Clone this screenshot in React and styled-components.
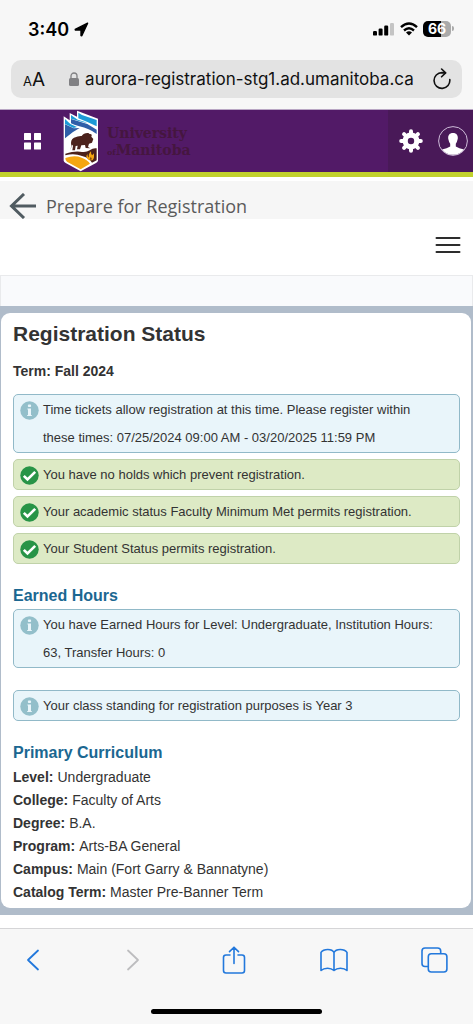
import styled, { createGlobalStyle } from 'styled-components';

const notices = [
  { id: 1, type: 'success', text: 'You have no holds which prevent registration.' },
  { id: 2, type: 'success', text: 'Your academic status Faculty Minimum Met permits registration.' },
  { id: 3, type: 'success', text: 'Your Student Status permits registration.' }
];

const curriculum = [
  { label: 'Level', value: 'Undergraduate' },
  { label: 'College', value: 'Faculty of Arts' },
  { label: 'Degree', value: 'B.A.' },
  { label: 'Program', value: 'Arts-BA General' },
  { label: 'Campus', value: 'Main (Fort Garry & Bannatyne)' },
  { label: 'Catalog Term', value: 'Master Pre-Banner Term' }
];

const gearTeeth = [0, 45, 90, 135, 180, 225, 270, 315];

const LocationIcon = () => (
  <svg width="15" height="15" viewBox="0 0 15 15" aria-hidden="true">
    <path d="M13.6 1.2 L1.2 7.3 L1.4 8 H7 V13.6 L7.8 13.8 Z" fill="#000" stroke="#000" strokeWidth="1.4" strokeLinejoin="round" />
  </svg>
);

const SignalIcon = () => (
  <svg width="22" height="14" viewBox="0 0 22 14" aria-hidden="true">
    <rect x="0" y="9" width="4" height="4.6" rx="1.2" />
    <rect x="5.6" y="6.5" width="4" height="7.1" rx="1.2" />
    <rect x="11.2" y="3.6" width="4" height="10" rx="1.2" />
    <rect x="17" y="1" width="4" height="12.6" rx="1.2" fill="#c4c4c4" />
  </svg>
);

const WifiIcon = () => (
  <svg width="18" height="14" viewBox="0 0 18 14" fill="none" stroke="#000" strokeWidth="2.4" aria-hidden="true">
    <path d="M1 5.2 Q9 -2.2 17 5.2" />
    <path d="M4 8.5 Q9 4.1 14 8.5" />
    <path d="M9 13.6 L6 10.5 Q9 8 12 10.5Z" fill="#000" stroke="none" />
  </svg>
);

const LockIcon = () => (
  <svg width="10" height="14" viewBox="0 0 10 14" aria-hidden="true">
    <rect x="0" y="6" width="10" height="8" rx="1.5" fill="#808083" />
    <path d="M2 6.5 V4 a3 3 0 0 1 6 0 V6.5" fill="none" stroke="#808083" strokeWidth="1.3" />
  </svg>
);

const ReloadIcon = () => (
  <svg width="18" height="22" viewBox="0 0 18 22" fill="none" stroke="#111" strokeWidth="1.6" strokeLinecap="round" strokeLinejoin="round" aria-hidden="true">
    <path d="M16.8 11.6 A7.9 7.9 0 1 1 9 4.6 L12.4 4.9" />
    <path d="M8.6 1 L12.6 4.9 L8.6 8.8" />
  </svg>
);

const GridIcon = () => (
  <svg width="17" height="17" viewBox="0 0 17 17" fill="#fff" aria-hidden="true">
    <rect width="7" height="7" rx=".6" />
    <rect x="10" width="7" height="7" rx=".6" />
    <rect y="9.5" width="7" height="7" rx=".6" />
    <rect x="10" y="9.5" width="7" height="7" rx=".6" />
  </svg>
);

const CrestLogo = () => (
  <svg width="36" height="62" viewBox="190 29 108 186" aria-hidden="true">
    <path d="M192 48 L210 60 L210 38 L232 49 L232 31 L295 55 V181 Q294 185 289 188 L243 213 L198 188 Q193 185 192 181Z" fill="#fff" />
    <path d="M236 37 L247 44 L291 59 V78 Q264 65 236 54Z" fill="#1c9ad6" />
    <path d="M214 56 L236 63 L263 71 L291 88 V101 Q268 84 239 78 Q222 74 214 69Z" fill="#2f5ea8" />
    <path d="M214 44 L234 58 L254 64 L263 69 L238 62 L214 55Z" fill="#1c9ad6" />
    <path d="M196 72 L222 84 L240 83 Q218 94 196 114Z" fill="#2f5ea8" />
    <path d="M196 56 L212 71 L232 80 L222 83 L196 71Z" fill="#1c9ad6" />
    <path d="M212 150 L215 136 Q211 118 223 112 Q237 106 246 107 Q252 97 266 98 L270 101 Q279 100 275 109 L281 116 L277 127 L268 130 L265 140 L272 144 L258 143 L256 134 L245 135 L241 147 L232 147 L234 136 L228 137 L226 150 L218 150 L220 136 L217 133Z" fill="#4b211b" />
    <path d="M197 160 Q226 151 241 154 Q259 158 270 150 Q281 142 291 144 V180 L277 187 Q267 171 247 167 Q223 157 197 165Z" fill="#4b211b" />
    <path d="M197 173 Q225 163 246 172 Q265 179 271 190 L243 207 L202 184 Q197 181 197 173Z" fill="#f5a611" />
    <path d="M268 180 Q255 171 263 161 Q263 169 268 172 Q265 161 274 153 Q273 161 278 165 L282 159 Q286 173 278 180Z" fill="#f5a611" />
    <path d="M269 177 Q274 175 273 169 Q277 173 275 178Z" fill="#4b211b" />
  </svg>
);

const GearIcon = () => (
  <svg width="24" height="24" viewBox="0 0 24 24" aria-hidden="true">
    <circle cx="12" cy="12" r="5.8" fill="none" stroke="#fff" strokeWidth="5.2" />
    {gearTeeth.map(angle => (
      <path key={angle} d="M12 5 V2.2" stroke="#fff" strokeWidth="4" strokeLinecap="round" transform={`rotate(${angle} 12 12)`} />
    ))}
  </svg>
);

const AvatarIcon = () => (
  <svg width="30" height="30" viewBox="0 0 30 30" aria-hidden="true">
    <circle cx="15" cy="15" r="14.4" fill="none" stroke="#cdbbd8" strokeWidth="1" />
    <path d="M15 7 C10.8 7 9.8 10.2 10.3 13 Q11 16.3 12.2 17.8 V20.6 Q9 22.6 4 23.6 A14.2 14.2 0 0 0 26 23.6 Q21 22.6 17.8 20.6 V17.8 Q19 16.3 19.7 13 C20.2 10.2 19.2 7 15 7Z" fill="#fff" />
  </svg>
);

const BackArrow = () => (
  <svg width="28" height="26" viewBox="0 0 28 26" fill="none" stroke="#505b61" strokeWidth="3" aria-hidden="true">
    <path d="M15 1 L2.5 13 L15 25 M2.5 13 H27" />
  </svg>
);

const MenuIcon = () => (
  <svg width="26" height="18" viewBox="0 0 26 18" stroke="#2d2d2d" strokeWidth="2" strokeLinecap="round" aria-hidden="true">
    <path d="M1.5 2 H24.5 M1.5 9 H24.5 M1.5 16 H24.5" />
  </svg>
);

const InfoIcon = () => (
  <svg width="19" height="19" viewBox="0 0 19 19" aria-hidden="true">
    <circle cx="9.5" cy="9.5" r="9.2" fill="#93bfca" />
    <rect x="7.9" y="3.6" width="3.2" height="2.4" rx=".8" fill="#e9f5fa" />
    <path d="M7.4 7.4 H11 V14 H11.8 V15 H7.2 V14 H8 V8.4 H7.4Z" fill="#e9f5fa" />
  </svg>
);

const CheckIcon = () => (
  <svg width="19" height="19" viewBox="0 0 19 19" aria-hidden="true">
    <circle cx="9.5" cy="9.5" r="9.2" fill="#289447" />
    <path d="M3.8 9.8 L7.5 13.5 L15.2 5.8" fill="none" stroke="#fff" strokeWidth="2.6" />
  </svg>
);

const ChevronIcon = ({ flip, color }) => (
  <svg width="14" height="22" viewBox="0 0 14 22" fill="none" stroke={color} strokeWidth="1.8" strokeLinecap="round" strokeLinejoin="round" aria-hidden="true">
    <path d={flip ? 'M2 1.5 L12 11 L2 20.5' : 'M12 1.5 L2 11 L12 20.5'} />
  </svg>
);

const ShareIcon = () => (
  <svg width="24" height="28" viewBox="0 0 24 28" fill="none" stroke="#2278dc" strokeWidth="1.6" strokeLinecap="round" strokeLinejoin="round" aria-hidden="true">
    <path d="M8 9 H4 Q1.5 9 1.5 11.5 V24.5 Q1.5 27 4 27 H20 Q22.5 27 22.5 24.5 V11.5 Q22.5 9 20 9 H16 M12 17.5 V1.5 M7.5 5.6 L12 1.2 L16.5 5.6" />
  </svg>
);

const BookIcon = () => (
  <svg width="28" height="24" viewBox="0 0 28 24" fill="none" stroke="#2278dc" strokeWidth="1.6" strokeLinejoin="round" aria-hidden="true">
    <path d="M14 4.5 Q12.5 1.5 7.8 1.5 Q3 1.5 1 4.4 V22.5 Q3.4 20.2 7.6 20.2 Q11.5 20.2 14 22.5 Q16.5 20.2 20.4 20.2 Q24.6 20.2 27 22.5 V4.4 Q25 1.5 20.2 1.5 Q15.5 1.5 14 4.5 V22.5" />
  </svg>
);

const TabsIcon = () => (
  <svg width="27" height="26" viewBox="0 0 27 26" fill="none" stroke="#2278dc" strokeWidth="1.6" aria-hidden="true">
    <path d="M7.3 19.5 H4 Q1 19.5 1 16.5 V4 Q1 1 4 1 H16.5 Q19.7 1 19.7 4 V6.7" />
    <rect x="7.3" y="6.8" width="18.6" height="18.2" rx="3" />
  </svg>
);

const Notice = ({ type, children }) => (
  <NoticeBox $type={type}>
    <NoticeIcon>{type === 'success' ? <CheckIcon /> : <InfoIcon />}</NoticeIcon>
    <NoticeText>{children}</NoticeText>
  </NoticeBox>
);

const App = () => {
  return (
    <>
      <GlobalStyle />
      <Screen>
        <StatusBar>
          <Clock>
            3:40
            <LocationIcon />
          </Clock>
          <StatusIcons>
            <SignalIcon />
            <WifiIcon />
            <Battery>66</Battery>
          </StatusIcons>
        </StatusBar>

        <AddressRow>
          <AddressBar>
            <TextSizeButton aria-label="Page settings">
              <SmallA>A</SmallA>A
            </TextSizeButton>
            <LockIcon />
            <AddressInput aria-label="Address" defaultValue="aurora-registration-stg1.ad.umanitoba.ca" />
            <IconButton aria-label="Reload">
              <ReloadIcon />
            </IconButton>
          </AddressBar>
        </AddressRow>

        <SiteHeader>
          <Brand>
            <IconButton aria-label="Applications">
              <GridIcon />
            </IconButton>
            <BrandLink href="#">
              <CrestLogo />
              <BrandName>
                <span>University</span>
                <span><small>of</small>Manitoba</span>
              </BrandName>
            </BrandLink>
          </Brand>
          <HeaderTools>
            <IconButton aria-label="Settings">
              <GearIcon />
            </IconButton>
            <IconButton aria-label="Profile">
              <AvatarIcon />
            </IconButton>
          </HeaderTools>
        </SiteHeader>

        <Breadcrumb>
          <BreadcrumbLink href="#">
            <BackArrow />
            Prepare for Registration
          </BreadcrumbLink>
        </Breadcrumb>

        <MenuRow>
          <IconButton aria-label="Menu">
            <MenuIcon />
          </IconButton>
        </MenuRow>
        <TabStrip />

        <Main>
          <Card>
            <PageTitle>Registration Status</PageTitle>
            <Term>Term: Fall 2024</Term>

            <NoticeList>
              <Notice type="info">
                Time tickets allow registration at this time. Please register within these times: 07/25/2024 09:00 AM - 03/20/2025 11:59 PM
              </Notice>
              {notices.map(notice => (
                <Notice key={notice.id} type={notice.type}>{notice.text}</Notice>
              ))}
            </NoticeList>

            <SectionTitle>Earned Hours</SectionTitle>
            <NoticeList $spaced>
              <Notice type="info">
                You have Earned Hours for Level: Undergraduate, Institution Hours: 63, Transfer Hours: 0
              </Notice>
              <Notice type="info">Your class standing for registration purposes is Year 3</Notice>
            </NoticeList>

            <SectionTitle>Primary Curriculum</SectionTitle>
            <Details>
              {curriculum.map(item => (
                <DetailRow key={item.label}>
                  <dt>{item.label}:</dt>
                  <dd>{item.value}</dd>
                </DetailRow>
              ))}
            </Details>
          </Card>
        </Main>

        <BottomBar>
          <BrowserNav>
            <NavButton aria-label="Back">
              <ChevronIcon color="#2278dc" />
            </NavButton>
            <NavButton aria-label="Forward" disabled>
              <ChevronIcon flip color="#bdbdbf" />
            </NavButton>
            <NavButton aria-label="Share">
              <ShareIcon />
            </NavButton>
            <NavButton aria-label="Bookmarks">
              <BookIcon />
            </NavButton>
            <NavButton aria-label="Tabs">
              <TabsIcon />
            </NavButton>
          </BrowserNav>
          <HomeIndicator />
        </BottomBar>
      </Screen>
    </>
  );
};

const GlobalStyle = createGlobalStyle`
  * {
    box-sizing: border-box;
  }

  body {
    margin: 0;
    background: #fff;
    color: #333;
    font-family: 'Liberation Sans', Arial, sans-serif;
    font-size: 14px;
  }

  svg {
    display: block;
    flex: none;
  }
`;

const Screen = styled.div`
  display: flex;
  flex-direction: column;
  min-height: 100vh;
`;

const StatusBar = styled.div`
  display: flex;
  align-items: center;
  justify-content: space-between;
  height: 60px;
  padding: 0 22px 2px 28px;
  background: #f7f7f7;
  color: #000;
  font-family: Inter, sans-serif;
`;

const Clock = styled.div`
  display: flex;
  align-items: center;
  gap: 5px;
  font-size: 18px;
  font-weight: 600;
`;

const StatusIcons = styled.div`
  display: flex;
  align-items: center;
  gap: 5px;
`;

const Battery = styled.div`
  position: relative;
  width: 28px;
  border-radius: 5px;
  background: linear-gradient(90deg, #000 66%, #aaa 66%);
  color: #fff;
  font-size: 14px;
  font-weight: 700;
  line-height: 16px;
  text-align: center;

  &::after {
    content: '';
    position: absolute;
    top: 5px;
    right: -3px;
    width: 2px;
    height: 5px;
    border-radius: 0 2px 2px 0;
    background: #aaa;
  }
`;

const AddressRow = styled.div`
  padding: 0 11px 11px;
  background: #f7f7f7;
  border-bottom: 1px solid #b9a6c4;
`;

const AddressBar = styled.div`
  display: flex;
  align-items: center;
  height: 38px;
  padding: 0 11px 0 12px;
  border-radius: 10px;
  background: #e3e3e3;
  font-family: Inter, sans-serif;
`;

const IconButton = styled.button`
  display: flex;
  align-items: center;
  justify-content: center;
  padding: 0;
  border: 0;
  background: none;
  cursor: pointer;
`;

const TextSizeButton = styled(IconButton)`
  align-items: baseline;
  margin-right: 24px;
  color: #111;
  font-family: inherit;
  font-size: 19px;
`;

const SmallA = styled.span`
  font-size: 13px;
`;

const AddressInput = styled.input`
  flex: 1;
  min-width: 0;
  padding: 0 0 0 6px;
  border: 0;
  outline: 0;
  background: none;
  color: #111;
  font-family: inherit;
  font-size: 17px;
`;

const SiteHeader = styled.header`
  display: flex;
  justify-content: space-between;
  height: 67px;
  background: #521a67;
  border-bottom: 5px solid #c1d12c;
`;

const Brand = styled.div`
  display: flex;
  align-items: center;
  gap: 22px;
  padding-left: 24px;
`;

const BrandLink = styled.a`
  display: flex;
  align-items: center;
  gap: 8px;
  color: #45163f;
  text-decoration: none;
`;

const BrandName = styled.span`
  display: flex;
  flex-direction: column;
  padding-top: 4px;
  font-family: 'DejaVu Serif', serif;
  font-size: 14px;
  font-weight: 700;
  line-height: 17px;

  small {
    font-size: 8px;
  }
`;

const HeaderTools = styled.div`
  display: flex;
  align-items: center;
  gap: 15px;
  padding: 0 5px 0 11px;
  background: #491958;
`;

const Breadcrumb = styled.nav`
  margin-top: 4px;
  padding: 12px 9px 0;
  background: #f6f6f6;
`;

const BreadcrumbLink = styled.a`
  display: flex;
  align-items: center;
  gap: 9px;
  color: #5b5b5b;
  font-family: 'Open Sans', sans-serif;
  font-size: 18px;
  line-height: 26px;
  text-decoration: none;
`;

const MenuRow = styled.div`
  display: flex;
  align-items: center;
  justify-content: flex-end;
  height: 56px;
  padding: 0 12px 4px;
`;

const TabStrip = styled.div`
  height: 31px;
  border: 1px solid #e9eaec;
  border-bottom: 0;
  background: #f9fafc;
`;

const Main = styled.main`
  padding: 7px 2px 7px 1px;
  margin-bottom: 13px;
  background: #b0bcca;
`;

const Card = styled.section`
  padding: 9px 11px 4px 12px;
  border-radius: 9px;
  background: #fff;
`;

const PageTitle = styled.h1`
  margin: 0;
  font-size: 21px;
  line-height: 24px;
`;

const Term = styled.p`
  margin: 15px 0 13px;
  font-weight: 700;
  line-height: 20px;
`;

const NoticeList = styled.div`
  display: flex;
  flex-direction: column;
  gap: ${props => props.$spaced ? '22px' : '6px'};
`;

const NoticeBox = styled.div`
  display: flex;
  gap: 4px;
  padding: 1px 16px 0 6px;
  border: 1px solid ${props => props.$type === 'success' ? '#c0d2a9' : '#91b9c8'};
  border-radius: 5px;
  background: ${props => props.$type === 'success' ? '#ddeac5' : '#e9f5fa'};
`;

const NoticeIcon = styled.span`
  padding-top: 5px;
`;

const NoticeText = styled.p`
  margin: 0;
  font-size: 13px;
  line-height: 28px;
`;

const SectionTitle = styled.h2`
  margin: 21px 0 2px;
  color: #1b6791;
  font-size: 16px;
  line-height: 22px;
`;

const Details = styled.dl`
  margin: 0;
`;

const DetailRow = styled.div`
  display: flex;
  gap: 4px;
  line-height: 23px;

  dt {
    font-weight: 700;
  }

  dd {
    margin: 0;
  }
`;

const BottomBar = styled.footer`
  display: flex;
  flex: 1;
  flex-direction: column;
  justify-content: space-between;
  padding: 17px 0 10px;
  border-top: 1px solid #d5d5d7;
  background: #f7f7f7;
`;

const BrowserNav = styled.div`
  display: flex;
  align-items: center;
  justify-content: space-between;
  padding: 0 24px 0 18px;
`;

const NavButton = styled(IconButton)`
  width: 30px;
`;

const HomeIndicator = styled.div`
  align-self: center;
  width: 36%;
  height: 5px;
  border-radius: 3px;
  background: #000;
`;

export default App;
